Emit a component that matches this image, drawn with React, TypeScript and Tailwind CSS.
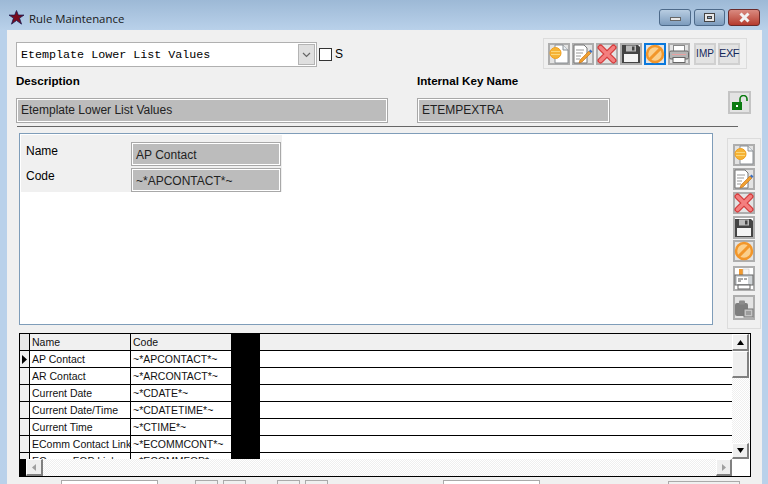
import { ReactNode } from 'react';

const Sun = () => (
  <svg width="20" height="20" viewBox="0 0 20 20" className="shrink-0">
    <path d="M6 1h8l5 5v13H6z" fill="#fff" stroke="#8a8f94" />
    <path d="M14 1v5h5" fill="#e8eef2" stroke="#8a8f94" />
    <circle cx="6.500" cy="9" r="5.500" fill="#f5b335" stroke="#f0a020" />
    <path d="M2 7.500h9M2 10.500h9" stroke="#fbd77a" />
  </svg>
);
const EditDoc = () => (
  <svg width="20" height="20" viewBox="0 0 20 20" className="shrink-0">
    <path d="M1 1h10l3 3v15H1z" fill="#fff" stroke="#777" />
    <path d="M3 6h8M3 9h7M3 12h5M3 15h4" stroke="#999" />
    <path d="M7 16l9-9 2 2-9 9-3 1z" fill="#f0a030" stroke="#c06a10" strokeWidth="0.600" />
    <path d="M16 7l1.500-1.500 2 2L18 9z" fill="#3a6fc0" />
  </svg>
);
const RedX = () => (
  <svg width="20" height="20" viewBox="0 0 20 20" className="shrink-0">
    <path d="M3.500 3.500l13 13M16.500 3.500l-13 13" stroke="#d43c3c" strokeWidth="6" strokeLinecap="round" />
    <path d="M3.500 3.500l13 13M16.500 3.500l-13 13" stroke="#f47f7f" strokeWidth="3.500" strokeLinecap="round" />
  </svg>
);
const Floppy = () => (
  <svg width="20" height="20" viewBox="0 0 20 20" className="shrink-0">
    <path d="M1 1h16l2 2v16H1z" fill="#444" />
    <rect x="5" y="1.500" width="10" height="6" fill="#bbb" />
    <rect x="11" y="2.500" width="2.500" height="4" fill="#444" />
    <rect x="3" y="10" width="14" height="8" fill="#f4f4f4" />
  </svg>
);
const Ban = () => (
  <svg width="20" height="20" viewBox="0 0 20 20" className="shrink-0">
    <circle cx="10" cy="10" r="8" fill="#fbcf8c" stroke="#f2962a" strokeWidth="2.500" />
    <path d="M4.500 15.500l11-11" stroke="#f2962a" strokeWidth="3" />
  </svg>
);
const Printer = () => (
  <svg width="20" height="20" viewBox="0 0 20 20" className="shrink-0">
    <rect x="4.500" y="1.500" width="11" height="6" fill="#fff" stroke="#888" />
    <rect x="0.500" y="7" width="19" height="8" rx="1.500" fill="#b4b4b4" stroke="#666" />
    <path d="M3 10.500h14" stroke="#e8a0a0" />
    <rect x="4" y="13.500" width="12" height="5" fill="#fff" stroke="#666" />
  </svg>
);
const Preview = () => (
  <svg width="20" height="22" viewBox="0 0 20 22" className="shrink-0">
    <rect x="5" y="1" width="8" height="7" fill="#f29a2e" />
    <rect x="9" y="1" width="6" height="7" fill="#f7f7f7" stroke="#bbb" strokeWidth="0.500" />
    <rect x="1" y="7" width="18" height="10" fill="#cfd3d6" stroke="#666" />
    <rect x="3" y="9" width="11" height="7" fill="#fff" />
    <path d="M4 11h5M10 11h3M4 13h3" stroke="#555" />
    <rect x="4" y="17" width="12" height="4" fill="#fff" stroke="#666" />
  </svg>
);
const Copy = () => (
  <svg width="20" height="22" viewBox="0 0 20 22" className="shrink-0">
    <rect x="1" y="6" width="13" height="13" rx="2" fill="#7e7e7e" />
    <rect x="5" y="3.500" width="6" height="4" rx="1" fill="#8c8c8c" />
    <rect x="10" y="12" width="9" height="8" fill="#c4c4c4" stroke="#777" />
    <path d="M12 15h5M12 17h5" stroke="#777" />
  </svg>
);
const Lock = () => (
  <svg width="18" height="16" viewBox="0 0 18 16" className="shrink-0">
    <rect x="1" y="7" width="10" height="8" fill="#0a7a10" />
    <rect x="5" y="10" width="2" height="2" fill="#fff" />
    <path d="M9 7V4a3.500 3.500 0 0 1 7 0v2" fill="none" stroke="#0a7a10" strokeWidth="1.600" />
  </svg>
);

const Btn = ({ children, className = 'w-[22px] h-[22px] border-[#aeaeae]' }: { children?: ReactNode; className?: string }) => (
  <div className={`flex items-center justify-center shrink-0 border-2 bg-[#e3e3e3] ${className}`}>{children}</div>
);

const Field = ({ text, className, inner = '' }: { text: string; className: string; inner?: string }) => (
  <div className={`shrink-0 border border-[#a8a8a8] p-px bg-white ${className}`}>
    <div className={`h-full bg-[#bcbcbc] pl-[3px] flex items-center text-[12px] text-[#222] ${inner}`}>{text}</div>
  </div>
);

const Triangle = ({ d, fill = '#000' }: { d: string; fill?: string }) => (
  <svg width="9" height="9" viewBox="0 0 9 9">
    <path d={d} fill={fill} />
  </svg>
);

const ScrollBtn = ({ children, className }: { children?: ReactNode; className: string }) => (
  <div className={`flex items-center justify-center bg-[#efefef] shrink-0 border-r-2 border-b-2 border-r-[#808080] border-b-[#808080] border-t border-l border-t-white border-l-white ${className}`}>
    {children}
  </div>
);

const rows = [
  ['AP Contact', '~*APCONTACT*~'],
  ['AR Contact', '~*ARCONTACT*~'],
  ['Current Date', '~*CDATE*~'],
  ['Current Date/Time', '~*CDATETIME*~'],
  ['Current Time', '~*CTIME*~'],
  ['EComm Contact Link', '~*ECOMMCONT*~'],
  ['EComm FOP Link', '~*ECOMMFOP*~'],
];

const dither =
  'bg-[repeating-conic-gradient(#ffffff_0%_25%,#efefef_0%_50%)] bg-[length:2px_2px]';

export default function App() {
  return (
    <div className="w-[768px] h-[484px] overflow-hidden flex flex-col bg-[#b9d1ea] text-black font-['Liberation_Sans',Arial,sans-serif]">
      {/* title bar */}
      <div className="h-[30px] shrink-0 flex items-start bg-gradient-to-b from-[#9db9d6] to-[#b9d1ea] pl-[9px] pr-[7px]">
        <svg className="mt-[10px]" width="15" height="15" viewBox="0 0 15 15">
          <path d="M7.500 0.500l1.800 4.600H15l-4.500 3 2 6-5-3.600-5 3.600 2-6L0 5.100h5.700z" fill="#7a0a1c" stroke="#1a1a50" strokeWidth="0.800" />
        </svg>
        <span className="ml-[5px] mt-[10px] text-[11.4px] leading-[17px] font-['Open_Sans',sans-serif] text-[#1a1a1a]">Rule Maintenance</span>
        <div className="ml-auto mt-[9px] mr-[1px] flex gap-[3px]">
          <div className="w-[32px] h-[17px] rounded-[3px] border border-[#4d6a8a] bg-gradient-to-b from-[#b8cde2] to-[#7d9cbd] flex items-center justify-center">
            <div className="w-[11px] h-[4px] bg-[#e8e8e8] border border-[#666] mt-[2px]" />
          </div>
          <div className="w-[31px] h-[17px] rounded-[3px] border border-[#4d6a8a] bg-gradient-to-b from-[#b8cde2] to-[#7d9cbd] flex items-center justify-center">
            <div className="w-[11px] h-[9px] bg-[#e8e8e8] border border-[#444] flex items-center justify-center">
              <div className="w-[5px] h-[3px] bg-[#8aa6c4] border border-[#444]" />
            </div>
          </div>
          <div className="w-[32px] h-[17px] rounded-[3px] border border-[#6a2a2a] bg-gradient-to-b from-[#d98a80] to-[#b53a2e] flex items-center justify-center">
            <svg width="13" height="11" viewBox="0 0 13 11">
              <path d="M2.500 1.500l8 8M10.500 1.500l-8 8" stroke="#f2f2f2" strokeWidth="3" />
            </svg>
          </div>
        </div>
      </div>

      {/* window body */}
      <div className="ml-[7px] mr-[6px] h-[454px] overflow-hidden bg-[#f0f0f0] flex flex-col">
        {/* top row */}
        <div className="flex items-start pl-[9px] pr-[15px] pt-[8px] h-[43px] shrink-0">
          <div className="mt-[4px] w-[301px] h-[25px] border border-[#b0b0b0] bg-white flex items-center justify-between pl-[4px] pr-px font-['Liberation_Mono',monospace] text-[11.7px]">
            <span className="pt-[2px]">Etemplate Lower List Values</span>
            <div className="w-[17px] h-[21px] border border-[#b4b4b4] bg-[#dfdfdf] flex items-center justify-center">
              <svg width="9" height="6" viewBox="0 0 9 6">
                <path d="M1 1l3.500 3.500L8 1" fill="none" stroke="#666" strokeWidth="1.200" />
              </svg>
            </div>
          </div>
          <div className="ml-[2px] mt-[10px] w-[13px] h-[13px] border border-[#333] bg-white" />
          <span className="ml-[3px] mt-[9px] text-[12px] leading-[15px]">S</span>
          <div className="ml-auto w-[204px] h-[31px] border border-[#dcdcdc] flex items-center pl-[4px] gap-[2px]">
            <Btn><Sun /></Btn>
            <Btn><EditDoc /></Btn>
            <Btn><RedX /></Btn>
            <Btn className="w-[22px] h-[22px] border-[#aeaeae] bg-white"><Floppy /></Btn>
            <Btn className="w-[22px] h-[22px] border-[#0a78dc]"><Ban /></Btn>
            <Btn><Printer /></Btn>
            <Btn className="ml-[2px] w-[22px] h-[22px] border-[#d0d0d0] text-[10px] text-[#14285a]">IMP</Btn>
            <Btn className="w-[22px] h-[22px] border-[#d0d0d0] text-[11px] tracking-[-0.5px] text-[#14285a]">EXF</Btn>
          </div>
        </div>

        {/* description + key */}
        <div className="flex pl-[9px] pr-[11px] h-[53px] shrink-0">
          <div className="w-[401px] shrink-0 flex flex-col">
            <span className="text-[11.6px] font-bold leading-[15px] h-[25px]">Description</span>
            <Field text="Etemplate Lower List Values" className="w-[372px] h-[25px]" inner="pb-[2px]" />
          </div>
          <div className="flex flex-col">
            <span className="text-[11.6px] font-bold leading-[15px] h-[25px]">Internal Key Name</span>
            <Field text="ETEMPEXTRA" className="w-[193px] h-[25px]" inner="pb-[2px]" />
          </div>
          <Btn className="ml-auto mt-[18px] w-[23px] h-[23px] border-[#c4c4c4]"><Lock /></Btn>
        </div>

        <div className="ml-[10px] w-[721px] h-[1px] bg-[#666] shrink-0" />

        {/* detail panel + side toolbar */}
        <div className="flex pl-[12px] pt-[6px] h-[206px] shrink-0 items-start">
          <div className="w-[694px] h-[192px] shrink-0 border border-[#7f9db9] bg-white p-px">
            <div className="w-[261px] h-[57px] bg-[#f0f0f0] flex">
              <div className="w-[110px] pl-[5px] pt-[9px] text-[12px] flex flex-col gap-[10px] leading-[15px]">
                <span>Name</span>
                <span>Code</span>
              </div>
              <div className="pt-[7px] flex flex-col gap-[2px]">
                <Field text="AP Contact" className="w-[150px] h-[24px]" inner="pt-[1px]" />
                <Field text="~*APCONTACT*~" className="w-[150px] h-[24px]" inner="pt-[1px]" />
              </div>
            </div>
          </div>
          <div className="ml-[14px] mt-[5px] w-[34px] h-[191px] shrink-0 border border-[#dcdcdc] flex flex-col items-center pt-[5px]">
            <Btn className="w-[22px] h-[22px] border-[#aeaeae] mb-[2px]"><Sun /></Btn>
            <Btn className="w-[22px] h-[22px] border-[#aeaeae] mb-[2px]"><EditDoc /></Btn>
            <Btn className="w-[22px] h-[22px] border-[#aeaeae] mb-[2px]"><RedX /></Btn>
            <Btn className="w-[22px] h-[23px] border-[#aeaeae] bg-white mb-px"><Floppy /></Btn>
            <Btn className="w-[22px] h-[22px] border-[#aeaeae] mb-[4px]"><Ban /></Btn>
            <Btn className="w-[22px] h-[25px] border-[#aeaeae] bg-white mb-[4px]"><Preview /></Btn>
            <Btn className="w-[22px] h-[25px] border-[#aeaeae] bg-[#bdbdbd]"><Copy /></Btn>
          </div>
        </div>

        {/* grid */}
        <div className="ml-[12px] w-[732px] h-[144px] shrink-0 border border-black bg-white flex overflow-hidden">
          <div className="flex flex-col w-[712px] shrink-0">
            <div className="h-[125px] overflow-hidden text-[10.5px] text-[#111]">
              <div className="flex h-[17px] bg-[#f0f0f0] border-b border-black">
                <div className="w-[10px] border-r border-black bg-[#e8e8e8]" />
                <div className="w-[101px] border-r border-black pl-[2px] leading-[16px]">Name</div>
                <div className="w-[100px] pl-[2px] leading-[16px]">Code</div>
                <div className="w-[29px] bg-black" />
              </div>
              {rows.map((r, i) => (
                <div key={r[0]} className="flex h-[17px] border-b border-black">
                  <div className="w-[10px] border-r border-black bg-[#f0f0f0] flex items-center">
                    {i === 0 && <Triangle d="M2 0l5 4.500L2 9z" />}
                  </div>
                  <div className="w-[101px] border-r border-black pl-[2px] leading-[16px] whitespace-nowrap">{r[0]}</div>
                  <div className="w-[100px] pl-[2px] leading-[16px]">{r[1]}</div>
                  <div className="w-[29px] bg-black" />
                </div>
              ))}
            </div>
            <div className={`h-[17px] flex ${dither}`}>
              <div className="w-[6px] bg-black" />
              <ScrollBtn className="w-[17px] h-[17px]"><Triangle d="M6 1v7L2 4.500z" fill="#a0a0a0" /></ScrollBtn>
              <ScrollBtn className="ml-auto w-[16px] h-[17px]"><Triangle d="M3 1v7l4-3.500z" fill="#a0a0a0" /></ScrollBtn>
            </div>
          </div>
          <div className="flex flex-col w-[18px] shrink-0">
            <ScrollBtn className="w-[17px] h-[17px]"><Triangle d="M4.500 2L8 7H1z" /></ScrollBtn>
            <ScrollBtn className="w-[17px] h-[27px]" />
            <div className={`h-[65px] ${dither}`} />
            <ScrollBtn className="w-[17px] h-[16px]"><Triangle d="M1 2h7L4.500 7z" /></ScrollBtn>
            <div className="h-[17px] bg-white" />
          </div>
        </div>

        {/* footer, cut off by the window edge */}
        <div className="flex items-start pt-[3px] shrink-0 h-[8px] overflow-hidden">
          <div className="ml-[54px] w-[97px] h-[20px] border border-[#aaa] bg-white" />
          <div className="ml-[37px] w-[23px] h-[20px] border border-[#aaa]" />
          <div className="ml-[5px] w-[23px] h-[20px] border border-[#aaa]" />
          <div className="ml-[31px] w-[23px] h-[20px] border border-[#aaa]" />
          <div className="ml-[5px] w-[23px] h-[20px] border border-[#aaa]" />
          <div className="ml-[115px] w-[97px] h-[20px] border border-[#aaa] bg-white" />
          <div className="ml-[128px] w-[72px] h-[20px] border border-[#aaa] mt-[1px]" />
        </div>
      </div>
    </div>
  );
}
